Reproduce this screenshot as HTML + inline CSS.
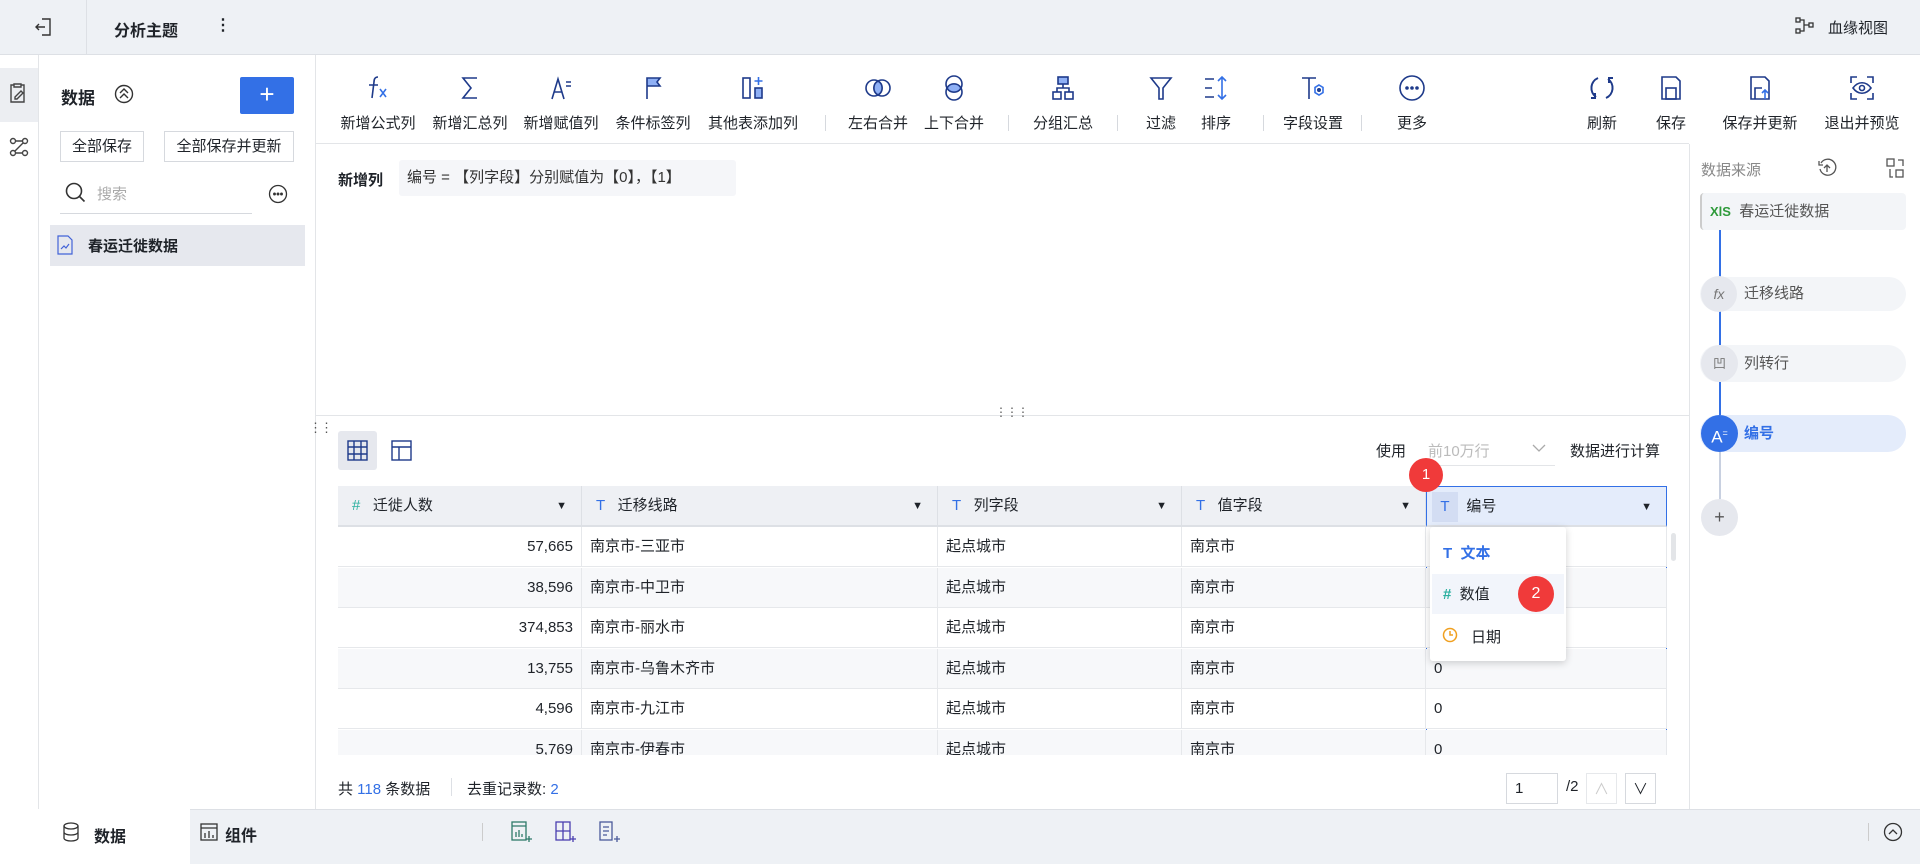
<!DOCTYPE html>
<html><head><meta charset="utf-8"><style>
*{box-sizing:border-box;margin:0;padding:0}
body{width:1920px;height:864px;overflow:hidden;position:relative;background:#fff;font-family:"Liberation Sans","Noto Sans CJK SC",sans-serif;color:#1f2329;font-size:15px}
.a{position:absolute}
.tb{position:absolute;top:73px;width:110px;margin-left:-55px;text-align:center;font-size:15px;color:#1f2329}
.tb svg{display:block;margin:0 auto 9px;width:30px;height:30px}
.sep{position:absolute;top:115px;width:1px;height:16px;background:#d6d9de}
.th{position:absolute;top:486px;height:41px;background:#eef0f4;border-right:1px solid #dde0e5;border-bottom:2px solid #dde0e5;line-height:40px;font-size:15px}
.cell{position:absolute;height:40px;line-height:40px;border-bottom:1px solid #e6e8eb;border-right:1px solid #e6e8eb;padding:0 8px;font-size:15px;overflow:hidden}
.rp{position:absolute;left:1700px;width:206px;background:#f3f5f8;border-radius:4px;color:#555;font-size:15px}
</style></head><body>
<div class="a" style="left:0;top:0;width:1920px;height:55px;background:#eef1f5;border-bottom:1px solid #dde0e5"></div>
<div class="a" style="left:86px;top:0;width:1px;height:55px;background:#dde0e5"></div>
<svg class="a" style="left:34px;top:16px" width="20" height="22" viewBox="0 0 20 22" fill="none" stroke="#333" stroke-width="1.4"><path d="M8 3h8v16H8M2 11h9M5 8l-3 3 3 3"/></svg>
<div class="a" style="left:114px;top:17px;font-size:16px;font-weight:bold">分析主题</div>
<div class="a" style="left:215px;top:15px;font-size:16px;font-weight:bold">⋮</div>
<svg class="a" style="left:1795px;top:17px" width="20" height="18" viewBox="0 0 20 18" fill="none" stroke="#333" stroke-width="1.3"><rect x="1" y="1" width="4" height="4"/><rect x="1" y="12" width="4" height="4"/><rect x="14" y="6" width="4" height="4"/><path d="M5 3h4v11H5M9 8h5"/></svg>
<div class="a" style="left:1828px;top:17px;font-size:15px">血缘视图</div>
<div class="a" style="left:0;top:55px;width:39px;height:754px;background:#fff;border-right:1px solid #e3e5e8"></div>
<div class="a" style="left:0;top:68px;width:38px;height:54px;background:#eceef2"></div>
<svg class="a" style="left:9px;top:82px" width="20" height="22" viewBox="0 0 20 22" fill="none" stroke="#444" stroke-width="1.4"><path d="M5 3H2v17h13V3h-3M5 2h7v3H5zM6 15l6-6 2 2-6 6H6z"/></svg>
<svg class="a" style="left:9px;top:136px" width="20" height="22" viewBox="0 0 20 22" fill="none" stroke="#444" stroke-width="1.4"><circle cx="4" cy="5" r="2.5"/><circle cx="16" cy="5" r="2.5"/><circle cx="4" cy="17" r="2.5"/><circle cx="16" cy="17" r="2.5"/><path d="M6.5 5h7M6.5 17h7M14 7L6 15"/></svg>
<div class="a" style="left:315px;top:55px;width:1px;height:754px;background:#e3e5e8"></div>
<div class="a" style="left:61px;top:84px;font-size:17px;font-weight:bold">数据</div>
<svg class="a" style="left:114px;top:84px" width="20" height="20" viewBox="0 0 20 20" fill="none" stroke="#333" stroke-width="1.4"><circle cx="10" cy="10" r="8.5"/><path d="M6 9l4-4 4 4M6 14l4-4 4 4"/></svg>
<div class="a" style="left:240px;top:77px;width:54px;height:37px;background:#3370e6;border-radius:2px;color:#fff;font-size:26px;line-height:35px;text-align:center">+</div>
<div class="a" style="left:60px;top:131px;width:84px;height:31px;border:1px solid #d6d9de;font-size:15px;line-height:29px;text-align:center">全部保存</div>
<div class="a" style="left:164px;top:131px;width:130px;height:31px;border:1px solid #d6d9de;font-size:15px;line-height:29px;text-align:center">全部保存并更新</div>
<svg class="a" style="left:64px;top:181px" width="22" height="22" viewBox="0 0 22 22" fill="none" stroke="#333" stroke-width="1.6"><circle cx="10" cy="10" r="7.5"/><path d="M15.5 15.5l5 5"/></svg>
<div class="a" style="left:97px;top:183px;color:#aaa;font-size:15px">搜索</div>
<div class="a" style="left:60px;top:213px;width:192px;height:1px;background:#d6d9de"></div>
<svg class="a" style="left:268px;top:184px" width="20" height="20" viewBox="0 0 20 20" fill="none" stroke="#333" stroke-width="1.3"><circle cx="10" cy="10" r="8.5"/><circle cx="6.5" cy="10" r=".8" fill="#333"/><circle cx="10" cy="10" r=".8" fill="#333"/><circle cx="13.5" cy="10" r=".8" fill="#333"/></svg>
<div class="a" style="left:50px;top:225px;width:255px;height:41px;background:#e6e8ee"></div>
<svg class="a" style="left:57px;top:235px" width="16" height="20" viewBox="0 0 16 20" fill="none" stroke="#4263d8" stroke-width="1.2"><path d="M1 1h10l4 4v14H1zM4 14l3-3 2 2 3-4"/></svg>
<div class="a" style="left:88px;top:235px;font-size:15px;font-weight:bold">春运迁徙数据</div>
<div class="a" style="left:316px;top:143px;width:1373px;height:1px;background:#e3e5e8"></div>
<div class="tb" style="left:378px"><svg viewBox="0 0 30 30" fill="none" stroke="#1e3a8a" stroke-width="1.6"><path d="M15 4c-3 0-4 2-4 5l-2 16M6 12h9"/><path d="M17 16l6 8M23 16l-6 8" stroke="#3370e6"/></svg>新增公式列</div>
<div class="tb" style="left:470px"><svg viewBox="0 0 30 30" fill="none" stroke="#1e3a8a" stroke-width="1.6"><path d="M22 5H8l8 10-8 10h14"/></svg>新增汇总列</div>
<div class="tb" style="left:561px"><svg viewBox="0 0 30 30" fill="none" stroke="#1e3a8a" stroke-width="1.6"><path d="M6 26l6-20 6 20M8 19h8M20 9h5M20 13h5"/></svg>新增赋值列</div>
<div class="tb" style="left:653px"><svg viewBox="0 0 30 30" fill="none" stroke="#1e3a8a" stroke-width="1.6"><path d="M9 26V5h13l-3 4 3 4H9" fill="#8fb0f5"/></svg>条件标签列</div>
<div class="tb" style="left:753px"><svg viewBox="0 0 30 30" fill="none" stroke="#1e3a8a" stroke-width="1.6"><rect x="5" y="5" width="7" height="20"/><rect x="17" y="15" width="7" height="10" fill="#8fb0f5"/><path d="M20.5 4v8M16.5 8h8" stroke="#3370e6"/></svg>其他表添加列</div>
<div class="sep" style="left:825px"></div>
<div class="tb" style="left:878px"><svg viewBox="0 0 30 30" fill="none" stroke="#1e3a8a" stroke-width="1.6"><circle cx="11" cy="15" r="8"/><circle cx="19" cy="15" r="8"/><path d="M15 8a8 8 0 010 14a8 8 0 010-14" fill="#8fb0f5"/></svg>左右合并</div>
<div class="tb" style="left:954px"><svg viewBox="0 0 30 30" fill="none" stroke="#1e3a8a" stroke-width="1.6"><circle cx="15" cy="11" r="8"/><circle cx="15" cy="19" r="8"/><path d="M8 15a8 8 0 0114 0a8 8 0 01-14 0" fill="#8fb0f5"/></svg>上下合并</div>
<div class="sep" style="left:1008px"></div>
<div class="tb" style="left:1063px"><svg viewBox="0 0 30 30" fill="none" stroke="#1e3a8a" stroke-width="1.6"><rect x="10" y="4" width="10" height="7" fill="#8fb0f5"/><rect x="5" y="19" width="8" height="7"/><rect x="17" y="19" width="8" height="7"/><path d="M15 11v4M9 19v-4h12v4"/></svg>分组汇总</div>
<div class="sep" style="left:1117px"></div>
<div class="tb" style="left:1161px"><svg viewBox="0 0 30 30" fill="none" stroke="#1e3a8a" stroke-width="1.6"><path d="M5 5h20l-8 10v11h-4V15z"/></svg>过滤</div>
<div class="tb" style="left:1216px"><svg viewBox="0 0 30 30" fill="none" stroke="#1e3a8a" stroke-width="1.6"><path d="M4 6h9M4 15h7M4 24h9"/><path d="M21 4v22M17 8l4-4 4 4M17 22l4 4 4-4" stroke="#3370e6"/></svg>排序</div>
<div class="sep" style="left:1263px"></div>
<div class="tb" style="left:1313px"><svg viewBox="0 0 30 30" fill="none" stroke="#1e3a8a" stroke-width="1.6"><path d="M4 5h14M11 5v21"/><path d="M21 12l4 2.5v5L21 22l-4-2.5v-5z" stroke="#3370e6"/><circle cx="21" cy="17" r="1.2" fill="#3370e6"/></svg>字段设置</div>
<div class="sep" style="left:1361px"></div>
<div class="tb" style="left:1412px"><svg viewBox="0 0 30 30" fill="none" stroke="#1e3a8a" stroke-width="1.6"><circle cx="15" cy="15" r="12"/><circle cx="10" cy="15" r="1" fill="#1e3a8a"/><circle cx="15" cy="15" r="1" fill="#1e3a8a"/><circle cx="20" cy="15" r="1" fill="#1e3a8a"/></svg>更多</div>
<div class="tb" style="left:1602px"><svg viewBox="0 0 30 30" fill="none" stroke="#1e3a8a" stroke-width="2"><path d="M11 5a11 11 0 00-2 19M19 25a11 11 0 002-19"/><path d="M8 20v5h-4M22 10V5h4"/></svg>刷新</div>
<div class="tb" style="left:1671px"><svg viewBox="0 0 30 30" fill="none" stroke="#1e3a8a" stroke-width="1.6"><path d="M6 4h14l4 4v18H6z"/><rect x="10" y="15" width="10" height="11"/></svg>保存</div>
<div class="tb" style="left:1760px"><svg viewBox="0 0 30 30" fill="none" stroke="#1e3a8a" stroke-width="1.6"><path d="M6 4h14l4 4v18H6z"/><path d="M10 26V15h7"/><path d="M20 26v-9M17 20l3-3 3 3" stroke="#3370e6"/></svg>保存并更新</div>
<div class="tb" style="left:1862px"><svg viewBox="0 0 30 30" fill="none" stroke="#1e3a8a" stroke-width="1.6"><path d="M4 10V4h6M20 4h6v6M26 20v6h-6M10 26H4v-6"/><path d="M6 15c5-7 13-7 18 0c-5 7-13 7-18 0z"/><circle cx="15" cy="15" r="2.5"/></svg>退出并预览</div>
<div class="a" style="left:338px;top:169px;font-size:15px;font-weight:bold">新增列</div>
<div class="a" style="left:399px;top:160px;width:337px;height:36px;background:#f5f6f9;border-radius:3px;line-height:36px;padding-left:8px;font-size:15px;color:#333">编号 = 【列字段】分别赋值为【0】，【1】</div>
<div class="a" style="left:316px;top:415px;width:1373px;height:1px;background:#e3e5e8"></div>
<div class="a" style="left:995px;top:405px;font-size:12px;color:#555;letter-spacing:-1px">⋮⋮⋮</div>
<div class="a" style="left:309px;top:420px;font-size:13px;color:#555;letter-spacing:-2px">⋮⋮</div>
<div class="a" style="left:338px;top:431px;width:39px;height:39px;background:#e6e8ee;border-radius:3px"></div>
<svg class="a" style="left:347px;top:440px" width="21" height="21" viewBox="0 0 21 21" fill="none" stroke="#1e3a8a" stroke-width="1.4"><rect x="1" y="1" width="19" height="19"/><path d="M7 1v19M14 1v19M1 7h19M1 14h19"/></svg>
<svg class="a" style="left:391px;top:440px" width="21" height="21" viewBox="0 0 21 21" fill="none" stroke="#1e3a8a" stroke-width="1.4"><rect x="1" y="1" width="19" height="19"/><path d="M1 7h19M8 7v13"/></svg>
<div class="a" style="left:1376px;top:440px;font-size:15px">使用</div>
<div class="a" style="left:1428px;top:440px;font-size:15px;color:#bbb">前10万行</div>
<div class="a" style="left:1420px;top:465px;width:135px;height:1px;background:#e3e5e8"></div>
<svg class="a" style="left:1532px;top:443px" width="14" height="10" viewBox="0 0 14 10" fill="none" stroke="#aaa" stroke-width="1.3"><path d="M1 2l6 6 6-6"/></svg>
<div class="a" style="left:1570px;top:440px;font-size:15px">数据进行计算</div>
<div class="th" style="left:338px;width:244px;padding-left:14px"><span style="color:#2bb0a0">#</span>&nbsp;&nbsp; 迁徙人数<span style="position:absolute;right:14px;font-size:11px">▼</span></div>
<div class="th" style="left:582px;width:356px;padding-left:14px"><span style="color:#3370e6">T</span>&nbsp;&nbsp; 迁移线路<span style="position:absolute;right:14px;font-size:11px">▼</span></div>
<div class="th" style="left:938px;width:244px;padding-left:14px"><span style="color:#3370e6">T</span>&nbsp;&nbsp; 列字段<span style="position:absolute;right:14px;font-size:11px">▼</span></div>
<div class="th" style="left:1182px;width:244px;padding-left:14px"><span style="color:#3370e6">T</span>&nbsp;&nbsp; 值字段<span style="position:absolute;right:14px;font-size:11px">▼</span></div>
<div class="th" style="left:1426px;width:241px;padding-left:5px;background:#e4ecfb;border:1px solid #3370e6;border-bottom:2px solid #dde0e5"><span style="display:inline-block;width:26px;height:30px;line-height:30px;text-align:center;background:#d3ddf3;color:#3370e6;vertical-align:middle">T</span>&nbsp; 编号<span style="position:absolute;right:14px;font-size:11px">▼</span></div>
<div class="a" style="left:1426px;top:527px;width:241px;height:228px;border-left:1px solid #3370e6;border-right:1px solid #3370e6"></div>
<div id="rows"></div>
<script>
var d=[["57,665","三亚市"],["38,596","中卫市"],["374,853","丽水市"],["13,755","乌鲁木齐市"],["4,596","九江市"],["5,769","伊春市"]];
var h="";
d.forEach(function(r,i){var y=527+i*40.5,bg=i%2?"#f7f8fa":"#fff";
h+='<div class="cell" style="left:338px;top:'+y+'px;width:244px;text-align:right;background:'+bg+'">'+r[0]+'</div>';
h+='<div class="cell" style="left:582px;top:'+y+'px;width:356px;background:'+bg+'">南京市-'+r[1]+'</div>';
h+='<div class="cell" style="left:938px;top:'+y+'px;width:244px;background:'+bg+'">起点城市</div>';
h+='<div class="cell" style="left:1182px;top:'+y+'px;width:244px;background:'+bg+'">南京市</div>';
h+='<div class="cell" style="left:1426px;top:'+y+'px;width:241px;background:'+bg+'">0</div>';});
document.getElementById("rows").innerHTML=h;
</script>
<div class="a" style="left:316px;top:755px;width:1373px;height:54px;background:#fff"></div>
<div class="a" style="left:1671px;top:533px;width:5px;height:28px;background:#e3e5e8;border-radius:3px"></div>
<div class="a" style="left:1430px;top:527px;width:136px;height:134px;background:#fff;box-shadow:0 2px 8px rgba(0,0,0,.18);border-radius:3px"></div>
<div class="a" style="left:1432px;top:574px;width:132px;height:40px;background:#f2f5fb"></div>
<div class="a" style="left:1443px;top:542px;font-size:15px;font-weight:bold;color:#3370e6">T&nbsp; 文本</div>
<div class="a" style="left:1443px;top:583px;font-size:15px"><span style="color:#2bb0a0;font-weight:bold">#</span>&nbsp; 数值</div>
<svg class="a" style="left:1442px;top:627px" width="16" height="16" viewBox="0 0 16 16" fill="none" stroke="#f0a020" stroke-width="1.5"><circle cx="8" cy="8" r="6.5"/><path d="M8 4v4h3"/></svg>
<div class="a" style="left:1471px;top:626px;font-size:15px">日期</div>
<div class="a" style="left:1518px;top:576px;width:36px;height:36px;border-radius:50%;background:#f03a3a;color:#fff;text-align:center;line-height:36px;font-size:16px">2</div>
<div class="a" style="left:1409px;top:458px;width:34px;height:34px;border-radius:50%;background:#f03a3a;color:#fff;text-align:center;line-height:34px;font-size:15px">1</div>
<div class="a" style="left:338px;top:778px;font-size:15px">共 <span style="color:#3370e6">118</span> 条数据</div>
<div class="a" style="left:451px;top:778px;width:1px;height:18px;background:#dde0e5"></div>
<div class="a" style="left:467px;top:778px;font-size:15px">去重记录数: <span style="color:#3370e6">2</span></div>
<div class="a" style="left:1506px;top:773px;width:52px;height:31px;border:1px solid #d6d9de;line-height:29px;padding-left:8px">1</div>
<div class="a" style="left:1566px;top:778px">/2</div>
<div class="a" style="left:1586px;top:773px;width:31px;height:31px;border:1px solid #e6e8eb;color:#ccc;text-align:center;line-height:31px">∧</div>
<div class="a" style="left:1625px;top:773px;width:31px;height:31px;border:1px solid #d6d9de;text-align:center;line-height:31px">∨</div>
<div class="a" style="left:1689px;top:144px;width:1px;height:665px;background:#e3e5e8"></div>
<div class="a" style="left:1701px;top:159px;font-size:15px;color:#888">数据来源</div>
<svg class="a" style="left:1817px;top:158px" width="20" height="20" viewBox="0 0 20 20" fill="none" stroke="#555" stroke-width="1.3"><path d="M4 5a8 8 0 11-1 6M2 3v4h4M10 14V7M7 10l3-3 3 3"/></svg>
<svg class="a" style="left:1886px;top:158px" width="18" height="20" viewBox="0 0 18 20" fill="none" stroke="#555" stroke-width="1.3"><rect x="1" y="1" width="7" height="7"/><rect x="10" y="12" width="7" height="7"/><path d="M12 2h5v6M4 11v8h3"/></svg>
<div class="rp" style="top:193px;height:37px;border-left:2px solid #ccc;line-height:37px;padding-left:8px"><b style="color:#2e9a3a;font-size:13px">XlS</b>&nbsp; 春运迁徙数据</div>
<div class="a" style="left:1719px;top:230px;width:2px;height:195px;background:#3370e6"></div>
<div class="rp" style="top:277px;height:34px;line-height:34px;padding-left:44px;border-radius:17px">迁移线路</div>
<div class="a" style="left:1701px;top:276px;width:36px;height:36px;border-radius:50%;background:#e6e8ee;text-align:center;line-height:36px;color:#777;font-style:italic;font-size:14px">fx</div>
<div class="rp" style="top:345px;height:37px;line-height:37px;padding-left:44px;border-radius:18px">列转行</div>
<div class="a" style="left:1701px;top:345px;width:37px;height:37px;border-radius:50%;background:#e6e8ee;text-align:center;line-height:37px;color:#777;font-size:13px">凹</div>
<div class="rp" style="top:415px;height:37px;line-height:37px;padding-left:44px;border-radius:18px;background:#e4ecfb;color:#3370e6;font-weight:bold">编号</div>
<div class="a" style="left:1701px;top:415px;width:37px;height:37px;border-radius:50%;background:#3370e6;text-align:center;line-height:37px;color:#fff;font-size:17px">A<sup style="font-size:9px">=</sup></div>
<div class="a" style="left:1719px;top:452px;width:2px;height:47px;background:#c8d0e0"></div>
<div class="a" style="left:1701px;top:499px;width:37px;height:37px;border-radius:50%;background:#e6e8ee;text-align:center;line-height:37px;color:#555;font-size:18px">+</div>
<div class="a" style="left:0;top:809px;width:1920px;height:55px;background:#eef1f5;border-top:1px solid #dde0e5"></div>
<div class="a" style="left:0;top:809px;width:190px;height:55px;background:#fff"></div>
<svg class="a" style="left:62px;top:822px" width="18" height="20" viewBox="0 0 18 20" fill="none" stroke="#333" stroke-width="1.3"><ellipse cx="9" cy="4" rx="7" ry="3"/><path d="M2 4v12c0 4 14 4 14 0V4M2 10c0 4 14 4 14 0"/></svg>
<div class="a" style="left:94px;top:823px;font-size:16px;font-weight:bold">数据</div>
<svg class="a" style="left:200px;top:823px" width="18" height="18" viewBox="0 0 18 18" fill="none" stroke="#333" stroke-width="1.3"><rect x="1" y="1" width="16" height="16"/><path d="M1 5h16M5 15v-5M9 15V8M13 15v-3"/></svg>
<div class="a" style="left:225px;top:822px;font-size:16px;font-weight:bold">组件</div>
<div class="a" style="left:482px;top:823px;width:1px;height:18px;background:#ccc"></div>
<svg class="a" style="left:510px;top:820px" width="22" height="24" viewBox="0 0 22 24" fill="none" stroke="#2e7a6a" stroke-width="1.3"><rect x="2" y="2" width="14" height="18"/><path d="M2 6h14M6 17v-5M9 17v-7M12 17v-3M16 19h6M19 16v6"/></svg>
<svg class="a" style="left:554px;top:820px" width="22" height="24" viewBox="0 0 22 24" fill="none" stroke="#4a3fb0" stroke-width="1.3"><rect x="2" y="2" width="14" height="18"/><path d="M2 11h14M9 2v18M16 19h6M19 16v6"/></svg>
<svg class="a" style="left:598px;top:820px" width="22" height="24" viewBox="0 0 22 24" fill="none" stroke="#4a5a9a" stroke-width="1.3"><rect x="2" y="2" width="12" height="18"/><path d="M5 7h6M5 11h6M5 15h4M16 19h6M19 16v6"/></svg>
<div class="a" style="left:1868px;top:823px;width:1px;height:18px;background:#ccc"></div>
<svg class="a" style="left:1883px;top:822px" width="20" height="20" viewBox="0 0 20 20" fill="none" stroke="#333" stroke-width="1.3"><circle cx="10" cy="10" r="8.5"/><path d="M6 12l4-4 4 4"/></svg>
</body></html>
